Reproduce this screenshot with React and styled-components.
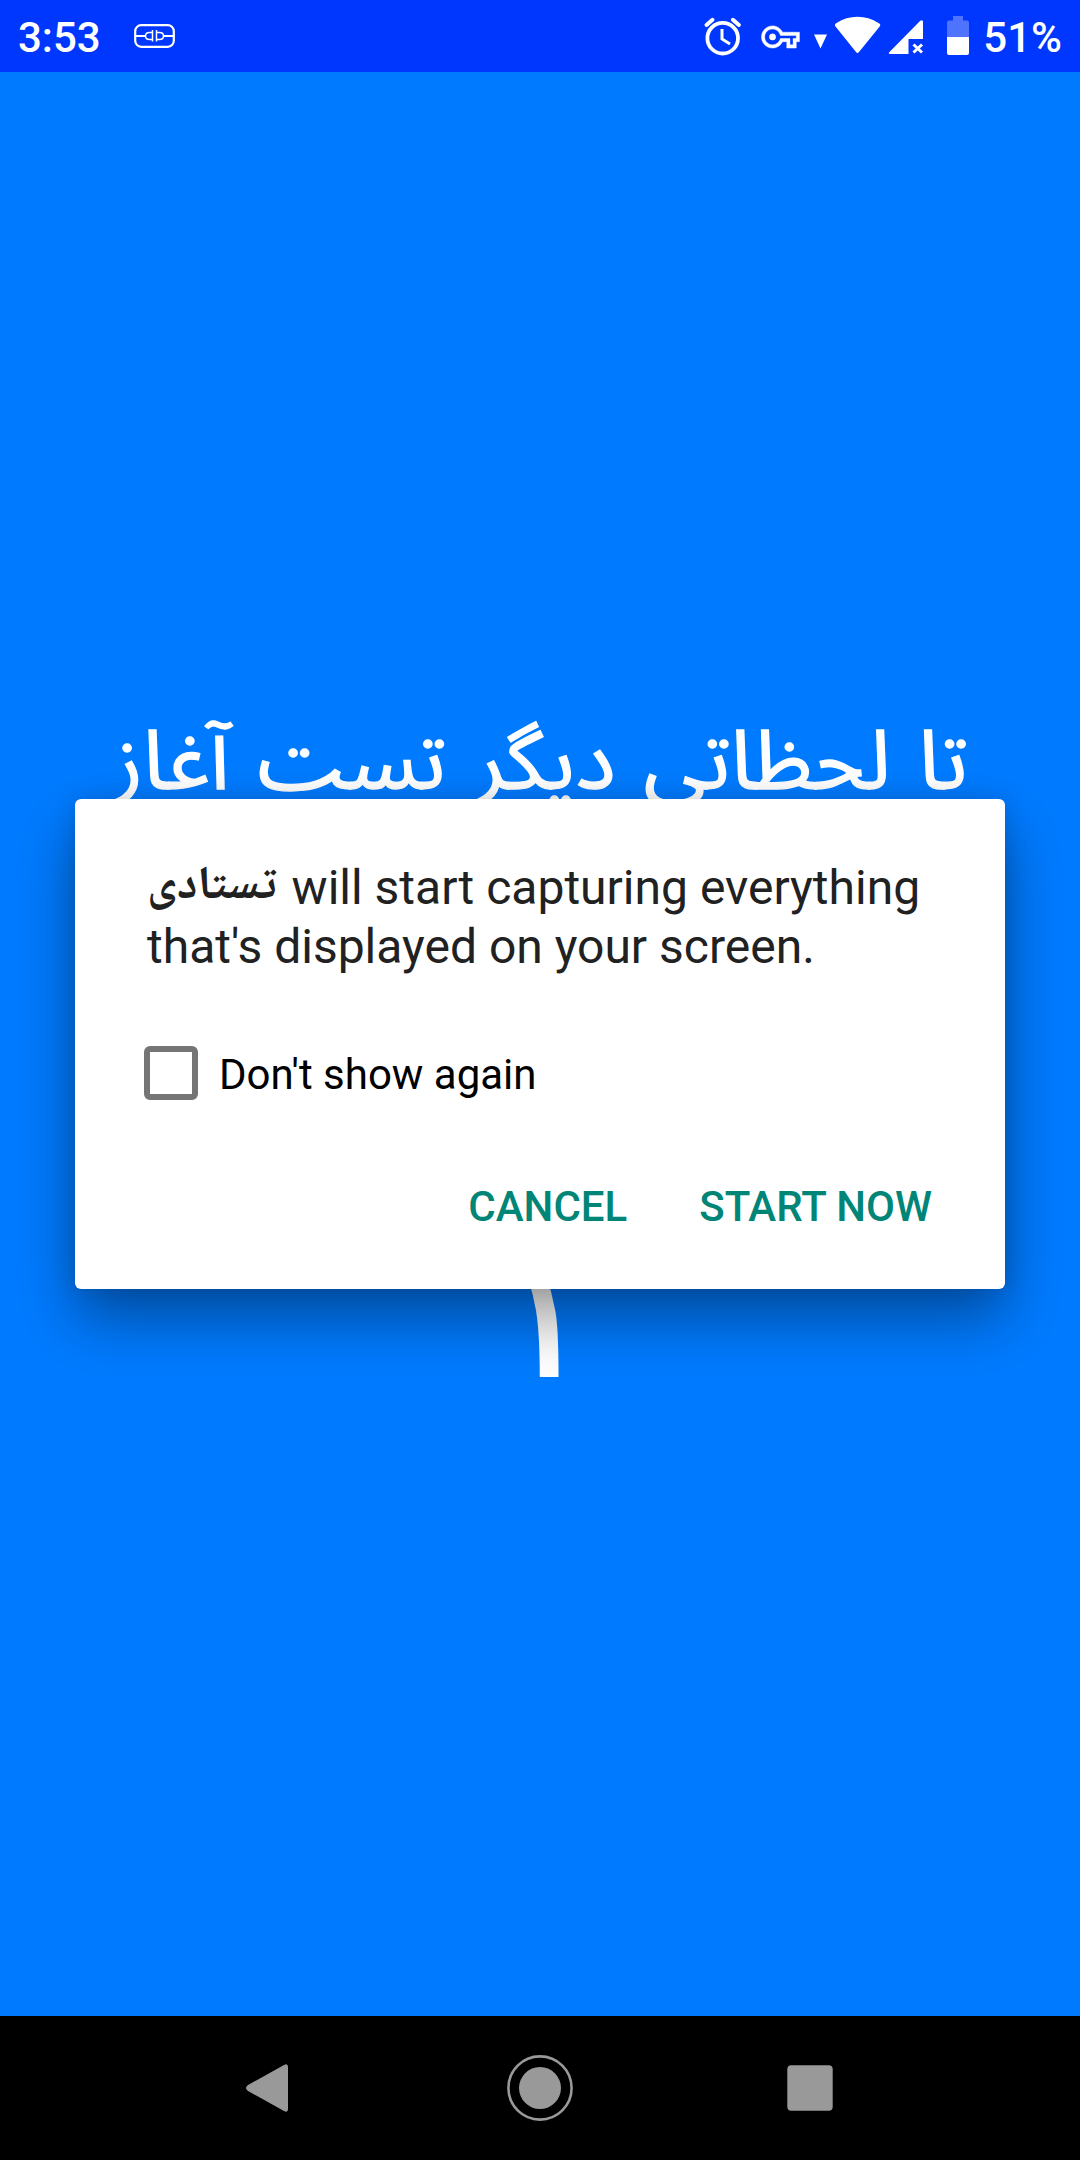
import React from "react";
import styled, { createGlobalStyle } from "styled-components";

const GlobalStyle = createGlobalStyle`
  * { box-sizing: border-box; }
  body { margin: 0; background: #007bff; }
`;

const Screen = styled.div`
  display: flex;
  flex-direction: column;
  width: 1080px;
  height: 2160px;
  overflow: hidden;
  background: #007bff;
  font-family: Roboto, "Noto Sans", sans-serif;
`;

const StatusBar = styled.header`
  display: flex;
  align-items: center;
  height: 72px;
  padding: 0 18px 0 18px;
  background: #0037ff;
  color: #fff;
  flex: none;
`;

const StatusText = styled.span`
  font-size: 42px;
  font-weight: 500;
  line-height: 72px;
  padding-top: 4px;
`;

const Notifications = styled.div`
  display: flex;
  flex: 1;
  padding-left: 31px;
`;

const StatusIcons = styled.div`
  display: flex;
  margin-right: 13px;
`;

const Content = styled.main`
  position: relative;
  display: flex;
  flex-direction: column;
  align-items: center;
  flex: 1;
  padding-top: 626px;
  color: #fff;
`;

const Heading = styled.h1`
  margin: 0;
  height: 406px;
  font-family: "Noto Sans Arabic", "DejaVu Sans", sans-serif;
  font-size: 82px;
  font-weight: 400;
  line-height: 130px;
  word-spacing: 6px;
  white-space: nowrap;
  transform: scaleX(1.026);
  -webkit-text-stroke: 1.3px #fff;
`;

const Countdown = styled.div`
  height: 400px;
  padding-left: 6px;
  font-family: "DejaVu Sans", sans-serif;
  font-size: 212px;
  line-height: 400px;
`;

const Dialog = styled.section`
  position: absolute;
  left: 75px;
  top: 727px;
  width: 930px;
  height: 490px;
  display: flex;
  flex-direction: column;
  padding: 59px 72px 0;
  border-radius: 6px;
  background: #fff;
  box-shadow: 0 30px 60px rgba(0, 0, 0, 0.38), 0 0 24px rgba(0, 0, 0, 0.12);
`;

const Message = styled.p`
  margin: 0;
  height: 188px;
  font-size: 48px;
  line-height: 59px;
  color: #212121;
  white-space: nowrap;
`;

const AppName = styled.bdi`
  margin-right: 3px;
  font-family: "Noto Naskh Arabic", "DejaVu Sans", sans-serif;
  font-size: 47px;
  font-weight: 700;
  line-height: 0;
  vertical-align: 6px;
`;

const CheckRow = styled.label`
  display: flex;
  align-items: center;
  gap: 21px;
  height: 54px;
  margin-left: -3px;
  font-size: 42px;
  color: #000;
`;

const CheckLabel = styled.span`
  padding-top: 2px;
`;

const CheckBox = styled.span`
  width: 54px;
  height: 54px;
  border: 6px solid #757575;
  border-radius: 6px;
`;

const Actions = styled.div`
  display: flex;
  justify-content: flex-end;
  gap: 72px;
  margin: 76px 1px 0 0;
`;

const Action = styled.button`
  padding: 0;
  border: 0;
  background: none;
  font: 500 42px/62px Roboto, sans-serif;
  color: #008577;
`;

const NavBar = styled.nav`
  display: grid;
  grid-template-columns: 270px 270px 270px;
  justify-content: center;
  align-items: center;
  justify-items: center;
  height: 144px;
  background: #000;
  flex: none;
`;

const Icon = styled.svg`
  display: block;
  width: ${(p) => p.$w}px;
  height: ${(p) => p.$h}px;
  flex: none;
`;

export default function App() {
  return (
    <Screen>
      <GlobalStyle />
      <StatusBar>
        <StatusText>3:53</StatusText>
        <Notifications>
          <Icon $w={44} $h={72} viewBox="132 0 44 72" fill="none" stroke="#fff">
            <rect x="135.2" y="25.2" width="38.6" height="21.6" rx="6" strokeWidth="2.2" />
            <path d="M135 36h10M164 36h10" strokeWidth="2" />
            <path d="M152.5 30v11.5M152.500 32.500h-3q-4 0-4 3.500t4 3.500h3M156.500 30v11.500M156.500 32.500h3q4 0 4 3.500t-4 3.500h-3" strokeWidth="1.5" />
          </Icon>
        </Notifications>
        <StatusIcons>
          <Icon $w={270} $h={72} viewBox="700 0 270 72" fill="#fff">
            <g fill="none" stroke="#fff">
              <circle cx="722.7" cy="38.2" r="15.3" strokeWidth="3.8" />
              <path d="M722 29v10l8 5" strokeWidth="3" />
              <path d="M706.5 25l6-5.2M738.9 25l-6-5.2" strokeWidth="4" strokeLinecap="round" />
            </g>
            <path transform="translate(761.5 18) scale(1.58)" stroke="#fff" strokeWidth="0.3" d="M22 19h-6v-4h-2.68c-1.14 2.42-3.6 4-6.32 4-3.86 0-7-3.14-7-7s3.14-7 7-7c2.72 0 5.17 1.58 6.32 4H24v6h-2v4zm-4-2h2v-4h2v-2H11.94l-.23-.67C11.01 8.34 9.11 7 7 7c-2.76 0-5 2.24-5 5s2.24 5 5 5c2.11 0 4.01-1.34 4.71-3.33l.23-.67H18v4zM9 12a2 2 0 1 1-4 0a2 2 0 1 1 4 0z" />
            <path d="M814 34.5h13l-6.5 14z" />
            <path d="M835.5 26.5C834.5 25 834.8 24 836.5 23C849 14.8 866 14.8 878.5 23C880.5 24 880.7 25 879.7 26.5L859 52Q857.5 54 856 52z" />
            <path d="M889 52.5L920 21Q923 19 923 22V39H908.5V54H890Q888 53.5 889 52.5z" />
            <path d="M913.5 44.5l8.5 8M922 44.5l-8.5 8" stroke="#fff" strokeWidth="3" />
            <path d="M953 16h10v4.5h4q2 0 2 2V37h-22V22.5q0-2 2-2h4z" fill="#4d73ff" />
            <path d="M947 37h22v16q0 2-2 2h-18q-2 0-2-2z" />
          </Icon>
        </StatusIcons>
        <StatusText>51%</StatusText>
      </StatusBar>
      <Content>
        <Heading dir="rtl">تا لحظاتی دیگر تست آغاز</Heading>
        <Countdown>۱</Countdown>
        <Dialog role="dialog">
          <Message>
            <AppName>تستادی</AppName> will start capturing everything<br />
            that's displayed on your screen.
          </Message>
          <CheckRow>
            <CheckBox />
            <CheckLabel>Don't show again</CheckLabel>
          </CheckRow>
          <Actions>
            <Action>CANCEL</Action>
            <Action>START NOW</Action>
          </Actions>
        </Dialog>
      </Content>
      <NavBar>
        <Icon $w={48} $h={54} viewBox="246 2061 48 54">
          <path d="M248 2085L284 2065Q288 2063 288 2067V2109Q288 2113 284 2111L248 2091Q244 2088 248 2085z" fill="#999" />
        </Icon>
        <Icon $w={68} $h={68} viewBox="-34 -34 68 68">
          <circle r="31.6" fill="none" stroke="#999" strokeWidth="2.6" />
          <circle r="21" fill="#999" />
        </Icon>
        <Icon $w={46} $h={46} viewBox="0 0 46 46">
          <rect x="0.3" y="0.3" width="45.4" height="45.4" rx="4" fill="#999" />
        </Icon>
      </NavBar>
    </Screen>
  );
}
